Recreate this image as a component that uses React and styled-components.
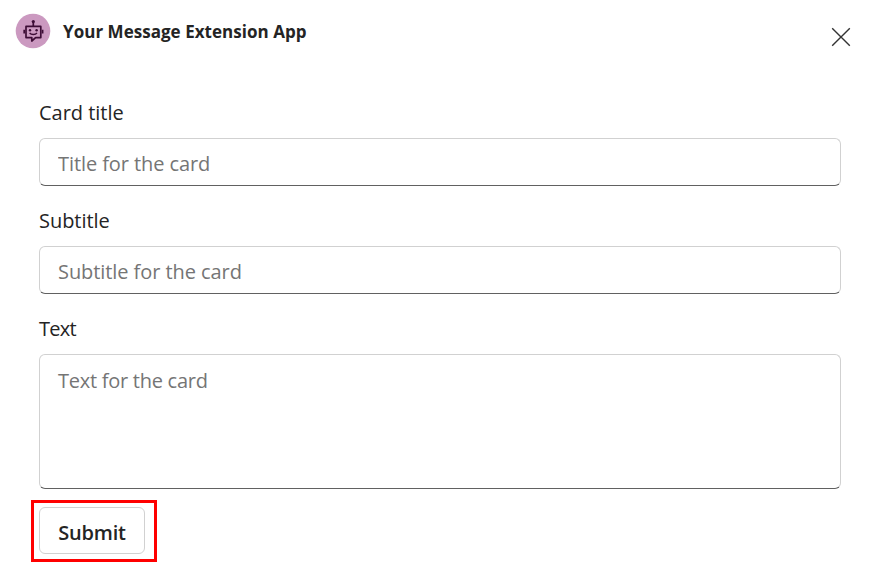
import React from "react";
import styled, { createGlobalStyle } from "styled-components";

const GlobalStyle = createGlobalStyle`
  *, *::before, *::after { box-sizing: border-box; }
  body {
    margin: 0;
    background: #fff;
    color: #242424;
    font-family: "Open Sans", "Noto Sans", sans-serif;
  }
  input, textarea, button { font-family: inherit; }
`;

const Dialog = styled.main`
  display: flex;
  flex-direction: column;
  width: 877px;
  height: 571px;
  background: #fff;
  overflow: hidden;
`;

const Header = styled.header`
  display: flex;
  align-items: flex-start;
  height: 95px;
  padding: 13px 26px 0 15px;
`;

const Avatar = styled.svg`
  flex: none;
  width: 36px;
  height: 36px;
`;

const AppName = styled.h1`
  flex: 1;
  margin: 0 0 0 12px;
  font-size: 17px;
  line-height: 38px;
  font-weight: 700;
  letter-spacing: ${(p) => p.$tracking}px;
  white-space: nowrap;
`;

const CloseButton = styled.button`
  display: flex;
  margin-top: 14px;
  padding: 0;
  border: 0;
  background: none;
`;

const Form = styled.form`
  display: flex;
  flex-direction: column;
  align-items: flex-start;
  padding: 0 36px 0 39px;
`;

const Field = styled.label`
  display: flex;
  flex-direction: column;
  width: 802px;
  margin-bottom: ${(p) => p.$gap ?? 17}px;
`;

const LabelText = styled.span`
  height: 43px;
  font-size: 20px;
  line-height: 35px;
  letter-spacing: ${(p) => p.$tracking}px;
`;

const TextInput = styled.input`
  width: 100%;
  height: 48px;
  padding: 3px 18px 0;
  border: 1px solid #d1d1d1;
  border-bottom-color: #616161;
  border-radius: 6px;
  outline: none;
  background: #fff;
  font-size: 20px;
  letter-spacing: ${(p) => p.$tracking}px;
  &::placeholder { color: #757575; opacity: 1; }
`;

const TextArea = styled(TextInput).attrs({ as: "textarea" })`
  display: block;
  height: 135px;
  padding: 12px 18px;
  line-height: 28px;
  resize: none;
`;

const Highlight = styled.div`
  margin-left: -8px;
  padding: 4px 9px 5px 5px;
  border: 3px solid #f00;
`;

const SubmitButton = styled.button`
  display: block;
  width: 106px;
  height: 47px;
  padding: 3px 0 0;
  border: 1px solid #d1d1d1;
  border-radius: 6px;
  background: #fff;
  color: #242424;
  font-size: 20px;
  font-weight: 600;
  letter-spacing: ${(p) => p.$tracking}px;
`;

function BotAvatar() {
  return (
    <Avatar viewBox="0 0 36 36" aria-hidden="true">
      <circle cx="18" cy="18" r="17.3" fill="#cb99c0" />
      <g fill="none" stroke="#3d0d36" strokeWidth="1.7">
        <path d="M11 13.4h14.8v11.2h-5.2l-3.8 3.4v-3.4h-5.8z" strokeLinejoin="round" />
        <path d="M18.3 13V9M9.2 16.8v3.8M27.6 16.8v3.8" />
        <path d="M14.6 20c1.6 2 5.8 2 7.4 0" strokeWidth="1.3" />
      </g>
      <g fill="#3d0d36">
        <circle cx="18.3" cy="8.6" r="1.6" />
        <circle cx="15" cy="17.2" r="1.2" />
        <circle cx="21.6" cy="17.2" r="1.2" />
      </g>
    </Avatar>
  );
}

export default function App() {
  return (
    <>
      <GlobalStyle />
      <Dialog>
        <Header>
          <BotAvatar />
          <AppName $tracking={0.03}>Your Message Extension App</AppName>
          <CloseButton aria-label="Close">
            <svg width="20" height="20" viewBox="0 0 20 20">
              <path d="M1.2 1.2l17.6 17.6M18.8 1.2L1.2 18.8" stroke="#333" strokeWidth="1.4" />
            </svg>
          </CloseButton>
        </Header>
        <Form>
          <Field>
            <LabelText $tracking={-0.02}>Card title</LabelText>
            <TextInput $tracking={-0.08} placeholder="Title for the card" />
          </Field>
          <Field>
            <LabelText $tracking={-0.05}>Subtitle</LabelText>
            <TextInput $tracking={-0.07} placeholder="Subtitle for the card" />
          </Field>
          <Field $gap={11}>
            <LabelText $tracking={-0.7}>Text</LabelText>
            <TextArea $tracking={-0.26} placeholder="Text for the card" />
          </Field>
          <Highlight>
            <SubmitButton type="button" $tracking={-0.2}>Submit</SubmitButton>
          </Highlight>
        </Form>
      </Dialog>
    </>
  );
}
